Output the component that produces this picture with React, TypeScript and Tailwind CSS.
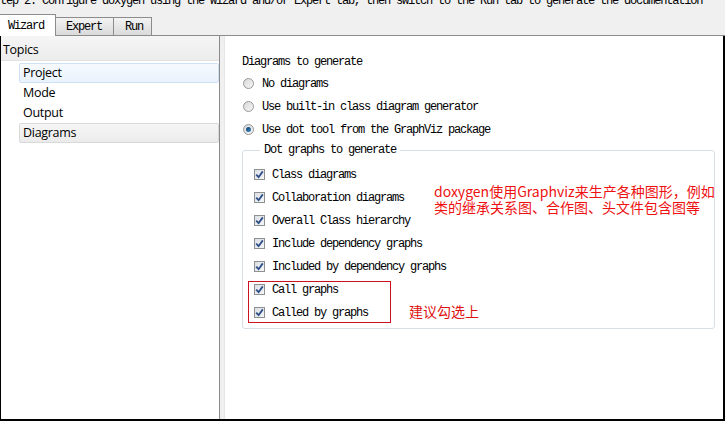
const checks = [
  'Class diagrams',
  'Collaboration diagrams',
  'Overall Class hierarchy',
  'Include dependency graphs',
  'Included by dependency graphs',
  'Call graphs',
  'Called by graphs',
]

function Radio({ checked }: { checked?: boolean }) {
  return (
    <span className="flex h-[11px] w-[11px] items-center justify-center rounded-full border border-[#979797] bg-gradient-to-br from-[#d8d8d8] to-[#f6f6f6]">
      {checked ? (
        <span className="h-[5px] w-[5px] rounded-full bg-gradient-to-br from-[#0b3b6b] to-[#3f8fc8]" />
      ) : null}
    </span>
  )
}

function Check() {
  return (
    <span className="flex h-[11px] w-[11px] items-center justify-center border border-[#8e8f8f] bg-gradient-to-br from-[#dbe0e6] to-[#f4f6f8]">
      <svg width="9" height="9" viewBox="0 0 9 9">
        <path d="M1.2 4.6 L3.6 7.2 L7.8 1.4" fill="none" stroke="#2f4d86" strokeWidth="1.8" />
      </svg>
    </span>
  )
}

export default function App() {
  return (
    <div className="flex h-[421px] w-[725px] flex-col overflow-hidden bg-[#f0f0f0] text-black">
      <div className="h-[15px] overflow-hidden">
        <div className="-mt-[5px] whitespace-nowrap font-['Liberation_Mono','Courier_New',monospace] text-[12px] leading-[12px] tracking-[-1.2px]">
          tep 2. Configure doxygen using the Wizard and/or Expert tab, then switch to the Run tab to generate the documentation
        </div>
      </div>

      <div className="flex h-[21px] items-end border-b border-[#8c8c8c] font-['Liberation_Mono','Courier_New',monospace] text-[12px] tracking-[-1.2px]">
        <div className="-mb-px flex h-[22px] w-[56px] items-center border-r border-t border-[#8c8c8c] bg-white pl-[8px] pt-[1px]">
          Wizard
        </div>
        <div className="flex h-[18px] w-[58px] items-center border-r border-t border-[#8c8c8c] bg-gradient-to-b from-[#f3f3f3] to-[#dadada] pl-[10px] pt-[1px]">
          Expert
        </div>
        <div className="flex h-[18px] w-[38px] items-center border-r border-t border-[#8c8c8c] bg-gradient-to-b from-[#f3f3f3] to-[#dadada] pl-[11px] pt-[1px]">
          Run
        </div>
      </div>

      <div className="flex flex-1 border-b-2 border-l border-r-2 border-black bg-white">
        <div className="flex w-[219px] flex-col border-r border-[#8a8a8a] font-['Open_Sans','Noto_Sans',sans-serif] text-[12.5px] tracking-[-0.3px]">
          <div className="flex h-[25px] items-center border-b border-[#e2e2e2] bg-gradient-to-b from-[#f5f5f5] to-[#ececec] pl-[2px] pt-[5px]">
            Topics
          </div>
          <div className="flex flex-col pl-[18px] pt-[2px]">
            <div className="flex h-[20px] items-center rounded-[2px] border border-[#cfe2f5] bg-gradient-to-b from-[#f6fafe] to-[#e9f3fd] pl-[3px]">
              Project
            </div>
            <div className="flex h-[20px] items-center pl-[4px]">Mode</div>
            <div className="flex h-[20px] items-center pl-[4px]">Output</div>
            <div className="flex h-[20px] items-center rounded-[2px] border border-[#d9d9d9] bg-gradient-to-b from-[#f6f6f6] to-[#ebebeb] pl-[3px]">
              Diagrams
            </div>
          </div>
        </div>

        <div className="w-[5px] border-r border-[#e6e6e6] bg-[#f0f0f0]" />

        <div className="relative flex flex-1 flex-col pl-[17px] pr-[8px] pt-[15px] font-['Liberation_Mono','Courier_New',monospace] text-[12px] tracking-[-1.2px]">
          <div className="flex h-[21px] items-center">Diagrams to generate</div>
          {['No diagrams', 'Use built-in class diagram generator', 'Use dot tool from the GraphViz package'].map((label, i) => (
            <div key={label} className="flex h-[23px] items-center">
              <span className="ml-[1px] mr-[8px]">
                <Radio checked={i === 2} />
              </span>
              {label}
            </div>
          ))}

          <fieldset className="mt-[3px] rounded-[3px] border border-[#d5dfe5] pb-[4px] pl-[11px]">
            <legend className="ml-[6px] px-[4px] leading-[12px]">Dot graphs to generate</legend>
            <div className="flex flex-col pt-[7px]">
              {checks.map((label) => (
                <div key={label} className="flex h-[23px] items-center">
                  <span className="mr-[7px]">
                    <Check />
                  </span>
                  {label}
                </div>
              ))}
            </div>
          </fieldset>

          <div className="absolute left-[23px] top-[245px] h-[42px] w-[143px] border border-[#cc1122]" />
          <div className="absolute left-[209px] top-[147px] whitespace-nowrap font-['Noto_Sans_CJK_SC',sans-serif] text-[14px] leading-[16px] tracking-normal text-[#ee1111]">
            <div>doxygen使用Graphviz来生产各种图形，例如</div>
            <div>类的继承关系图、合作图、头文件包含图等</div>
          </div>
          <div className="absolute left-[184px] top-[267px] whitespace-nowrap font-['Noto_Sans_CJK_SC',sans-serif] text-[14px] leading-[16px] tracking-normal text-[#dd1111]">
            建议勾选上
          </div>
        </div>
      </div>
    </div>
  )
}
